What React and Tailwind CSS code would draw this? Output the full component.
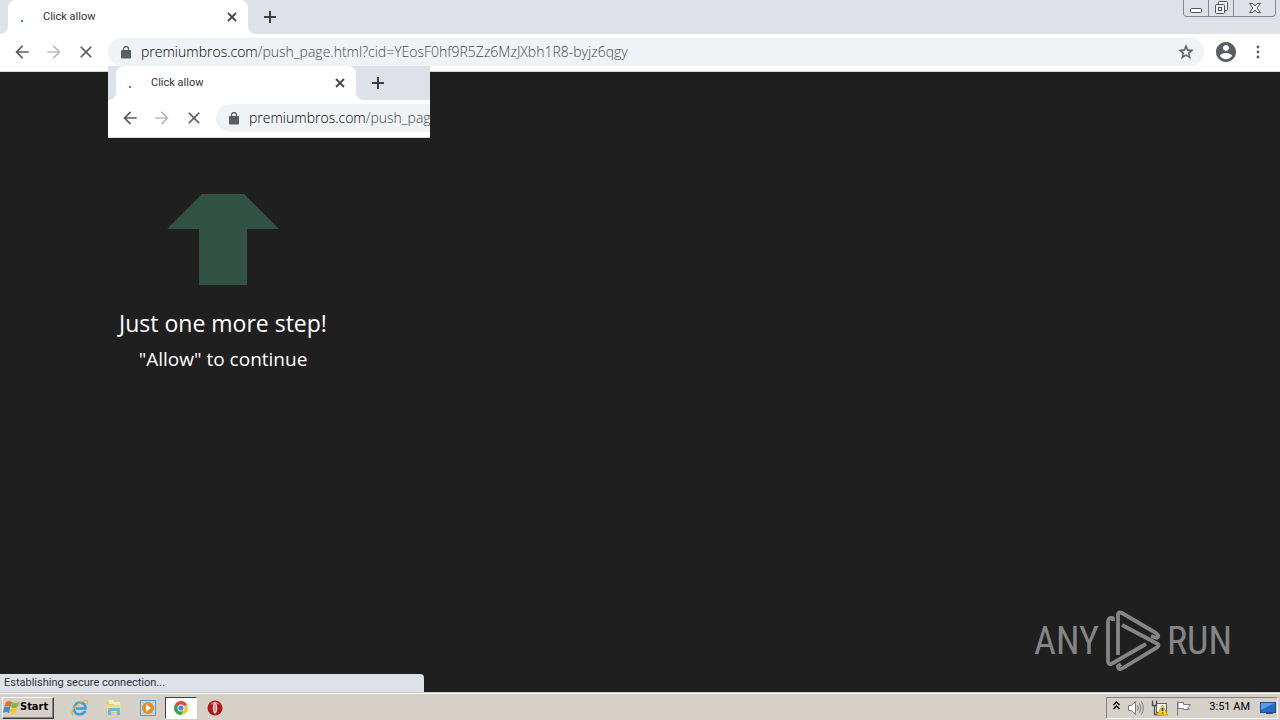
import React from "react";

const uiFont = "font-['Roboto','Noto_Sans',sans-serif]";
const boldUiFont = "font-['DejaVu_Sans_Condensed','Noto_Sans',sans-serif]";

function ToolIcon({ label, children, className = "" }) {
  return (
    <button type="button" aria-label={label} className={`flex h-7 w-8 shrink-0 items-center justify-center ${className}`}>
      <svg viewBox="0 0 24 24" className="h-5 w-5" fill="currentColor" aria-hidden="true">
        {children}
      </svg>
    </button>
  );
}

function WindowButtons() {
  return (
    <div className="mr-1 ml-auto flex h-[17px] shrink-0 rounded-b-[4px] border border-t-0 border-[#85888f] text-[#53565d]">
      <button type="button" aria-label="Minimize" className="flex w-[25px] items-center justify-center border-r border-[#85888f]">
        <svg width="14" height="14" viewBox="0 0 14 14" fill="#fff" stroke="currentColor">
          <rect x="1.5" y="7.5" width="11" height="4" rx="1" />
        </svg>
      </button>
      <button type="button" aria-label="Restore" className="flex w-[25px] items-center justify-center border-r border-[#85888f]">
        <svg width="14" height="14" viewBox="0 0 14 14" fill="#eef0f4" stroke="currentColor">
          <rect x="4.5" y="0.5" width="9" height="9" rx="1" />
          <rect x="1.5" y="3.5" width="9" height="9" rx="1" />
          <rect x="4.5" y="6.5" width="3" height="3" />
        </svg>
      </button>
      <button type="button" aria-label="Close" className="flex w-[41px] items-center justify-center">
        <svg width="14" height="14" viewBox="0 0 14 14" fill="#f5f6f8" stroke="currentColor">
          <path d="M1.5 2.5h3.5l2 2.5 2-2.5h3.5l-3.5 4.5 3.500 4.500h-3.500l-2-2.500-2 2.500h-3.500l3.500-4.500z" />
        </svg>
      </button>
    </div>
  );
}

function BrowserChrome({ windowButtons = false, id, path }) {
  return (
    <div className="w-full">
      <div className="flex h-[34px] items-stretch bg-[#dee1e8]">
        <div className="h-full w-2 shrink-0 bg-white">
          <div className="h-full rounded-br-lg bg-[#dee1e8]" />
        </div>
        <div className="flex w-60 shrink-0 items-center rounded-t-lg bg-white">
          <span className="mt-2 ml-[13px] h-0.5 w-0.5 shrink-0 bg-[#3a87d8]" />
          <span className={`ml-5 flex-1 text-[11px] leading-4 text-[#303338] ${uiFont}`}>Click allow</span>
          <button type="button" aria-label="Close tab" className="mr-2 flex h-4 w-4 items-center justify-center text-[#45484d]">
            <svg width="10" height="10" viewBox="0 0 10 10" stroke="currentColor" strokeWidth="1.8">
              <path d="M1 1l8 8M9 1L1 9" />
            </svg>
          </button>
        </div>
        <div className="flex flex-1 bg-white">
          <div className="flex flex-1 rounded-bl-lg bg-[#dee1e8]">
            <button type="button" aria-label="New tab" className="ml-2 flex w-7 items-center justify-center text-[#3b3e44]">
              <svg width="12" height="12" viewBox="0 0 12 12" stroke="currentColor" strokeWidth="2">
                <path d="M6 0v12M0 6h12" />
              </svg>
            </button>
            {windowButtons && <WindowButtons />}
          </div>
        </div>
      </div>
      <div className="flex h-[38px] items-center border-b border-[#d5d6d8] bg-white pb-px text-[#5a5d61]">
        <ToolIcon label="Back" className="ml-1.5">
          <path d="M20 11H7.830l5.590-5.590L12 4l-8 8 8 8 1.410-1.410L7.830 13H20v-2z" />
        </ToolIcon>
        <ToolIcon label="Forward" className="text-[#b8babd]">
          <path d="M12 4l-1.410 1.410L16.170 11H4v2h12.170l-5.580 5.590L12 20l8-8z" />
        </ToolIcon>
        <ToolIcon label="Stop">
          <path d="M19 6.410L17.590 5 12 10.590 6.410 5 5 6.410 10.590 12 5 17.590 6.410 19 12 13.410 17.590 19 19 17.590 13.410 12z" />
        </ToolIcon>
        <div className="ml-1.5 flex h-7 min-w-0 flex-1 items-center rounded-full bg-[#f0f3f6]">
          <svg viewBox="0 0 10 13" className="mr-2.5 ml-[13px] h-[13px] w-2.5 shrink-0" fill="#5a5d61" aria-hidden="true">
            <rect y="4" width="10" height="8.500" rx="1" />
            <path d="M2.500 5V3a2.500 2.500 0 015 0v2" fill="none" stroke="#5a5d61" strokeWidth="1.300" />
          </svg>
          <a
            id={id}
            href="#page"
            className="min-w-0 flex-1 overflow-hidden font-['Open_Sans','Noto_Sans',sans-serif] text-[14px] leading-5 font-light whitespace-nowrap text-[#44484d]"
          >
            <span className="text-black">premiumbros.com</span>
            {path}
          </a>
          {windowButtons && (
            <button type="button" aria-label="Bookmark this page" className="mr-2.5 shrink-0">
              <svg viewBox="1 1 22 22" className="h-4 w-4" fill="currentColor" stroke="currentColor" strokeWidth="0.600">
                <path d="M22 9.240l-7.190-.62L12 2 9.190 8.630 2 9.240l5.460 4.730L5.820 21 12 17.270 18.180 21l-1.630-7.030L22 9.240zM12 15.400l-3.760 2.270 1-4.280-3.320-2.880 4.380-.38L12 6.100l1.710 4.040 4.380.38-3.320 2.880 1 4.280L12 15.400z" />
              </svg>
            </button>
          )}
        </div>
        {windowButtons && (
          <div className="mr-1.5 ml-1.5 flex">
            <button type="button" aria-label="Profile" className="flex h-7 w-8 items-center justify-center">
              <svg viewBox="2 2 20 20" className="h-5 w-5" fill="currentColor">
                <path d="M12 2C6.480 2 2 6.480 2 12s4.480 10 10 10 10-4.480 10-10S17.520 2 12 2zm0 3c1.660 0 3 1.340 3 3s-1.340 3-3 3-3-1.340-3-3 1.340-3 3-3zm0 14.200c-2.500 0-4.710-1.280-6-3.220.03-1.990 4-3.080 6-3.080 1.990 0 5.970 1.090 6 3.080-1.290 1.940-3.500 3.220-6 3.220z" />
              </svg>
            </button>
            <ToolIcon label="Menu">
              <circle cx="12" cy="6" r="1.700" />
              <circle cx="12" cy="12" r="1.700" />
              <circle cx="12" cy="18" r="1.700" />
            </ToolIcon>
          </div>
        )}
      </div>
    </div>
  );
}

function AnyRunLogo() {
  return (
    <div className="absolute right-12 bottom-5 flex items-center gap-1.5 font-['Roboto_Condensed','Roboto',sans-serif] text-[38px] leading-none text-[#858585]">
      <span>ANY</span>
      <svg width="56" height="62" viewBox="0 0 56 62" fill="none" stroke="#858585" strokeWidth="3.800" strokeLinejoin="round" strokeLinecap="butt" aria-hidden="true">
        <path d="M8 11V8Q3 7 3 12V50Q3 56 8 53L41 34" />
        <path d="M13 45V5Q13 1 17 3L51 23Q55 26 52 28L46 26" />
        <path d="M17 15L51 33Q56 35 51 38L18 58Q13 61 13 56L16 54" />
      </svg>
      <span>RUN</span>
    </div>
  );
}

function Taskbar() {
  return (
    <footer className="flex h-7 shrink-0 items-center border-t border-[#c9c8c4] bg-[#d5d0c8] shadow-[inset_0_1px_0_#ffffff]">
      <button
        type="button"
        className={`mt-0.5 ml-0.5 flex h-[22px] w-[52px] items-center border border-t-white border-r-[#404040] border-b-[#404040] border-l-white text-[11px] font-bold text-black shadow-[inset_-1px_-1px_0_#808080] ${boldUiFont}`}
      >
        <svg width="17" height="17" viewBox="0 0 17 17" className="shrink-0" aria-hidden="true">
          <path d="M3 3Q6 1 9 3L7.500 8Q4 6 1 8z" fill="#e8702a" />
          <path d="M9.500 3Q12 5 16.500 3L14.500 8Q11 10 8 8z" fill="#80b83d" />
          <path d="M1 8.500Q4 6.500 7.300 8.500L6 14Q3 12 0 14z" fill="#418ed0" />
          <path d="M8 8.500Q11 10.500 14.300 8.500L12.500 14Q9 16 6.500 14z" fill="#f6c532" />
        </svg>
        <span>Start</span>
      </button>
      <nav aria-label="Programs" className="mt-0.5 ml-[9px] flex items-center">
        <button type="button" aria-label="Internet Explorer" className="flex w-[34px] justify-center">
          <svg width="18" height="18" viewBox="0 0 18 18" fill="none">
            <path d="M14.500 12Q12 15.500 8.500 15.500Q3 15 3 9.500Q4 3.500 9 3.500Q14.500 4 14.500 9.500H5" stroke="#38a0dc" strokeWidth="2.400" />
            <path d="M2 16Q-1 12 6 6Q14 0 16 2Q17 3 16 5" stroke="#e5b63a" strokeWidth="1.300" />
          </svg>
        </button>
        <button type="button" aria-label="File Explorer" className="flex w-[34px] justify-center">
          <svg width="18" height="18" viewBox="0 0 18 18">
            <path d="M2 3h5l1 2h7v9H2z" fill="#e7c861" />
            <path d="M4 1h5v4H4zM9 3h6v3H9z" fill="#f9edb0" />
            <path d="M2 6h14v7H2z" fill="#f4dc84" />
            <path d="M3 16V10Q3 9 4 9H14Q15 9 15 10V16H12V12H6V16z" fill="#72b5d7" />
          </svg>
        </button>
        <button type="button" aria-label="Media Player" className="flex w-[34px] justify-center">
          <svg width="18" height="18" viewBox="0 0 18 18">
            <rect x="1.500" y="1.500" width="15" height="15" fill="#b8dbf2" stroke="#5d9dca" />
            <circle cx="9" cy="9" r="6" fill="#f28a18" />
            <path d="M7 5l5 4-5 4z" fill="#fff" />
          </svg>
        </button>
        <button type="button" aria-label="Chrome" className="flex h-[22px] w-8 items-center justify-center border border-t-[#404040] border-r-white border-b-white border-l-[#404040] bg-white">
          <svg width="14" height="14" viewBox="0 0 14 14">
            <circle cx="7" cy="7" r="7" fill="#f5c431" />
            <path d="M7 7L1 3.500A7 7 0 0113 3.500z" fill="#dd4b3e" />
            <path d="M7 7L1 3.500A7 7 0 007 14L10 9z" fill="#36a355" />
            <circle cx="7" cy="7" r="3.500" fill="#fff" />
            <circle cx="7" cy="7" r="2.600" fill="#4586e8" />
          </svg>
        </button>
        <button type="button" aria-label="Opera" className="flex w-9 justify-center">
          <svg width="16" height="16" viewBox="0 0 16 16">
            <circle cx="8" cy="8" r="7.500" fill="#b3161c" />
            <path d="M3 5Q8-2 13 5Q8 2 3 5z" fill="#e77a7a" />
            <ellipse cx="8" cy="8" rx="2.200" ry="5.500" fill="#f5e3e3" />
            <ellipse cx="8" cy="8" rx="0.800" ry="4" fill="#c98080" />
          </svg>
        </button>
      </nav>
      <div className="mt-0.5 mr-0.5 ml-auto flex h-[22px] items-center border border-t-[#808080] border-r-white border-b-white border-l-[#808080] pr-px pl-1">
        <button type="button" aria-label="Show hidden icons" className="mb-1 mr-1.5 flex w-2.5 justify-center">
          <svg width="7" height="9" viewBox="0 0 7 9" fill="none" stroke="#111" strokeWidth="1.400">
            <path d="M0.500 4L3.500 1L6.500 4M0.500 8L3.500 5L6.500 8" />
          </svg>
        </button>
        <svg width="18" height="16" viewBox="0 0 18 16" className="mr-1.5" fill="none" stroke="#77797b" role="img" aria-label="Volume">
          <path d="M1.500 5.500h3L8.500 1.500v13L4.500 10.500h-3z" fill="#fff" />
          <path d="M10.500 5.500Q12 8 10.500 10.500M12.500 3.500Q15 8 12.500 12.500M14.500 1.500Q18 8 14.500 14.500" />
        </svg>
        <svg width="18" height="16" viewBox="0 0 18 16" className="mr-1.5" role="img" aria-label="Network warning">
          <rect x="5.500" y="3.500" width="10" height="9" fill="#f4f4f4" stroke="#606366" />
          <path d="M1.500 0.500v5h4v-5M3.500 5.500v9h9" fill="none" stroke="#4c4e50" strokeWidth="1.300" />
          <path d="M11.500 5L17 15H6z" fill="#f7cf20" stroke="#ad8507" strokeWidth="0.600" />
          <path d="M11.500 8v3M11.500 12.500v1" stroke="#222" strokeWidth="1.400" />
        </svg>
        <svg width="18" height="16" viewBox="0 0 18 16" className="mr-4" fill="#fff" stroke="#77797b" role="img" aria-label="Action center">
          <path d="M2.500 15.500V1.500M3 2.500H8.500V4.500H15.500L13 7.500L14.500 9.500H8.500V8.500H3z" />
        </svg>
        <time className={`mr-2.5 text-[11px] text-black ${uiFont}`}>3:51 AM</time>
        <button type="button" aria-label="Show desktop">
          <svg width="16" height="14" viewBox="0 0 16 14">
            <rect x="0.500" y="1.500" width="15" height="10" fill="#276bc3" stroke="#1c4e96" />
            <path d="M1 2h14L1 9z" fill="#5b9be5" />
            <path d="M6 12h7v1H6z" fill="#334a66" />
          </svg>
        </button>
      </div>
    </footer>
  );
}

export default function App() {
  return (
    <div className="relative flex h-screen flex-col overflow-hidden bg-[#1f1f1f]">
      <header className="shrink-0">
        <BrowserChrome windowButtons id="address" path="/push_page.html?cid=YEosF0hf9R5Zz6MzJXbh1R8-byjz6qgy" />
      </header>
      <div className="absolute top-[66px] left-[108px] w-[322px] overflow-hidden">
        <div className="w-[800px]">
          <BrowserChrome id="page-address" path="/push_page" />
        </div>
      </div>
      <main id="page" className="relative min-h-0 flex-1 pt-[122px] pl-[108px] text-white">
        <div className="flex w-[230px] flex-col items-center font-['Open_Sans','Noto_Sans',sans-serif] whitespace-nowrap">
          <svg width="112" height="91" viewBox="0 0 112 91" fill="#315244" aria-hidden="true">
            <path d="M35 0h42l35 35H80v56H32V35H0z" />
          </svg>
          <h1 className="mt-[22px] text-[23px] leading-8 font-medium">Just one more step!</h1>
          <p className="mt-1 text-[19px] leading-8">"Allow" to continue</p>
        </div>
        <AnyRunLogo />
        <div className={`absolute bottom-0 left-0 h-[18px] w-1/3 max-w-[424px] rounded-tr bg-[#dee1e8] px-1 text-[11px] leading-[18px] text-[#303338] ${uiFont}`}>
          Establishing secure connection...
        </div>
      </main>
      <Taskbar />
    </div>
  );
}
